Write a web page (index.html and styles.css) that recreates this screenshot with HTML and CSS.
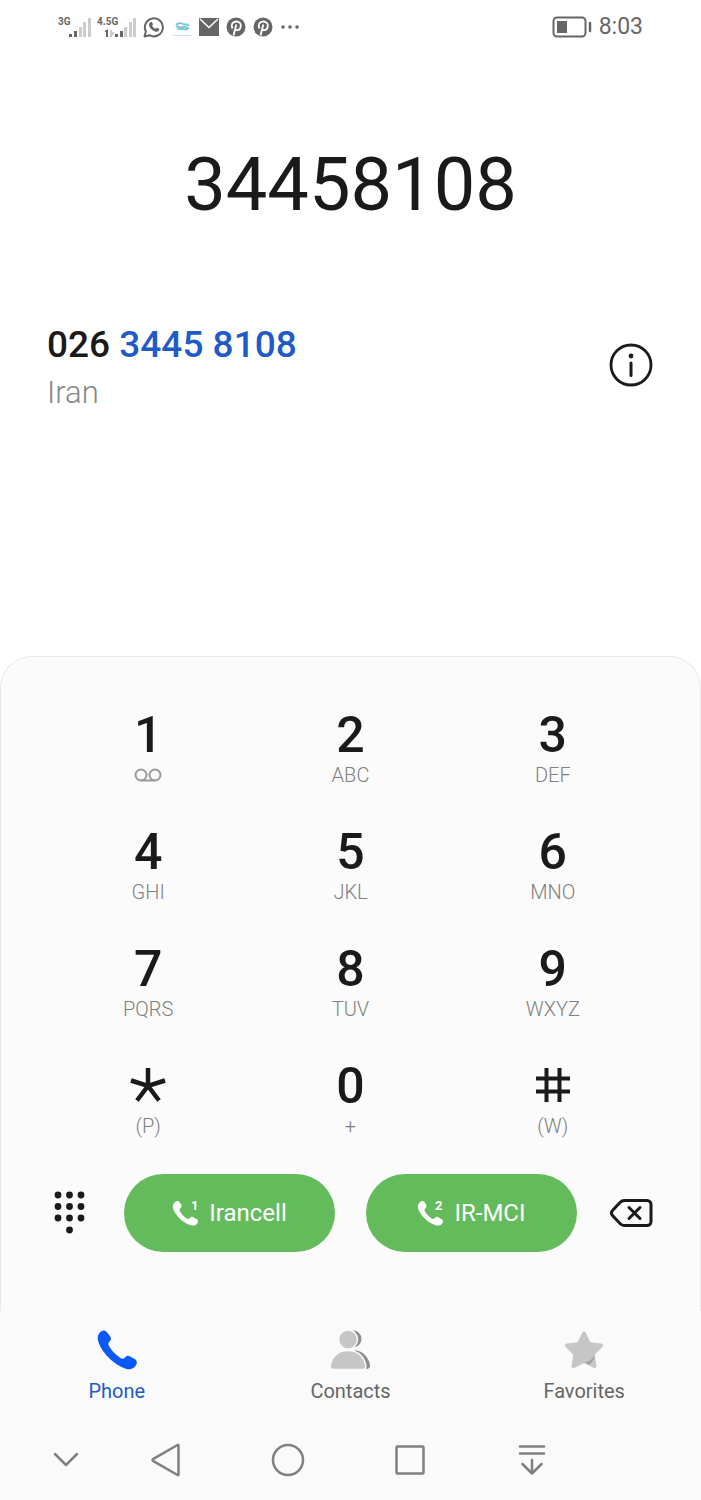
FILE: index.html
```html
<!DOCTYPE html>
<html lang="en">
<head>
  <meta charset="UTF-8">
  <meta name="viewport" content="width=device-width, initial-scale=1.0">
  <title>Phone</title>
  <link rel="stylesheet" href="styles.css">
</head>
<body>
  <header class="status">
    <div class="status-left">
      <svg class="signal" width="80" height="24" viewBox="0 0 80 24">
        <text x="0" y="10">3G</text>
        <text x="39" y="10">4.5G</text>
        <path class="on" d="M11 19h3v3h-3zM16 16h3v6h-3z"/>
        <path class="off" d="M21 12h3v10h-3zM25 7h3v15h-3zM30 3h3v19h-3z"/>
        <path class="on" d="M57 19h3v3h-3zM62 16h3v6h-3zM47 16l3-2v8h-2v-5h-1z"/>
        <path class="off" d="M52 15h2v2h2v3h-2v2h-2zM66 12h3v10h-3zM71 7h3v15h-3zM75 3h3v19h-3z"/>
      </svg>
      <svg width="22" height="22" viewBox="0 0 22 22">
        <path d="M1.500 20.500l1.400-5A9 9 0 1 1 6.500 19.200z" fill="none" stroke="#666" stroke-width="2" stroke-linejoin="round"/>
        <path d="M7.600 6c.6-.5 1.200-.3 1.500.3l.8 1.800c.2.6-.7 1.300-.7 1.700.6 1.400 1.800 2.500 3.200 3 .5 0 1.100-1.200 1.600-1l2 1c.6.4.1 1.800-.5 2.300-1 .8-2.300.9-4.100.1-2.500-1.100-4.300-3-5.100-5C5.700 8.500 6.300 6.900 7.600 6z" fill="#666"/>
      </svg>
      <svg width="20" height="20" viewBox="0 0 20 20">
        <path d="M1 1h18v18H1z" fill="#fdfefe"/>
        <path d="M1 18.500h18" stroke="#c5e8ec"/>
        <path d="M4 8c2-2 5-2 7-1s4-1 6 2M4 10c3-2 4 2 7 0s3 2 6 1M5 12c3-1 8 1 11 0" fill="none" stroke="#79c7d2" stroke-width="1.800"/>
      </svg>
      <svg width="20" height="18" viewBox="0 0 20 18">
        <path d="M0 0h20v18H0z" fill="#666"/>
        <path d="M1 1l9 8.500L19 1" fill="none" stroke="#fff" stroke-width="1.500"/>
      </svg>
      <svg width="20" height="20" viewBox="0 0 20 20">
        <circle cx="10" cy="10" r="9.500" fill="#666"/>
        <path d="M6.500 11.500C4.500 8 6.500 4.500 10.300 4.500c3 0 4.700 2 4.500 4.400-.2 2.500-1.700 4.300-3.500 4.300-1.100 0-1.700-.6-2-1.200M10.300 7.500L7.500 18.500" fill="none" stroke="#fff" stroke-width="1.800"/>
      </svg>
      <svg width="20" height="20" viewBox="0 0 20 20">
        <circle cx="10" cy="10" r="9.500" fill="#666"/>
        <path d="M6.500 11.500C4.500 8 6.500 4.500 10.300 4.500c3 0 4.700 2 4.500 4.400-.2 2.500-1.700 4.300-3.500 4.300-1.100 0-1.700-.6-2-1.200M10.300 7.500L7.500 18.500" fill="none" stroke="#fff" stroke-width="1.800"/>
      </svg>
      <svg width="20" height="20" viewBox="0 0 20 20" fill="#666">
        <circle cx="3" cy="10" r="1.800"/><circle cx="10" cy="10" r="1.800"/><circle cx="17" cy="10" r="1.800"/>
      </svg>
    </div>
    <div class="status-right">
      <svg width="40" height="22" viewBox="0 0 40 22">
        <rect x="1.500" y="1.500" width="32" height="19" rx="3.500" fill="none" stroke="#666" stroke-width="2"/>
        <path d="M5 5h10v12H5z" fill="#666"/>
        <path d="M38 7v8" stroke="#666" stroke-width="2.500" stroke-linecap="round"/>
      </svg>
      <span>8:03</span>
    </div>
  </header>

  <main class="dialer">
    <input class="number" type="tel" value="34458108" aria-label="Number">

    <section class="match">
      <div class="match-text">
        <p class="match-number">026 <span>3445 8108</span></p>
        <p class="match-place">Iran</p>
      </div>
      <button class="icon-btn" aria-label="Details">
        <svg width="44" height="44" viewBox="0 0 44 44">
          <circle cx="22" cy="22" r="20" fill="none" stroke="#1a1a1a" stroke-width="2.800"/>
          <circle cx="22" cy="13" r="2.400" fill="#1a1a1a"/>
          <path d="M22 20v12.500" stroke="#1a1a1a" stroke-width="3" stroke-linecap="round"/>
        </svg>
      </button>
    </section>

    <section class="panel">
      <div class="keys">
        <button class="key"><b>1</b>
          <small><svg width="28" height="14" viewBox="0 0 28 14" fill="none" stroke="#999" stroke-width="2"><circle cx="7" cy="7" r="5.500"/><circle cx="21" cy="7" r="5.500"/><path d="M7 12.500h14"/></svg></small>
        </button>
        <button class="key"><b>2</b><small>ABC</small></button>
        <button class="key"><b>3</b><small>DEF</small></button>
        <button class="key"><b>4</b><small>GHI</small></button>
        <button class="key"><b>5</b><small>JKL</small></button>
        <button class="key"><b>6</b><small>MNO</small></button>
        <button class="key"><b>7</b><small>PQRS</small></button>
        <button class="key"><b>8</b><small>TUV</small></button>
        <button class="key"><b>9</b><small>WXYZ</small></button>
        <button class="key" aria-label="Star">
          <svg width="36" height="56" viewBox="0 0 36 56" fill="none" stroke="#1a1a1a" stroke-width="4.500">
            <path d="M18 10v18M1 22.500L18 28l17-5.500M7 42.500L18 28l11 14.500"/>
          </svg>
          <small>(P)</small>
        </button>
        <button class="key"><b>0</b><small>+</small></button>
        <button class="key" aria-label="Hash">
          <svg width="36" height="56" viewBox="0 0 36 56" fill="none" stroke="#1a1a1a" stroke-width="4">
            <path d="M11.500 10v34M24.500 10v34M1 20.500h34M1 33.500h34"/>
          </svg>
          <small>(W)</small>
        </button>
      </div>

      <div class="actions">
        <button class="icon-btn" aria-label="Hide keypad">
          <svg width="32" height="46" viewBox="0 0 32 46" fill="#1a1a1a">
            <circle cx="4" cy="5" r="3.400"/><circle cx="15.500" cy="5" r="3.400"/><circle cx="27" cy="5" r="3.400"/>
            <circle cx="4" cy="16.500" r="3.400"/><circle cx="15.500" cy="16.500" r="3.400"/><circle cx="27" cy="16.500" r="3.400"/>
            <circle cx="4" cy="28" r="3.400"/><circle cx="15.500" cy="28" r="3.400"/><circle cx="27" cy="28" r="3.400"/>
            <circle cx="15.500" cy="40" r="3.400"/>
          </svg>
        </button>
        <button class="call">
          <svg width="28" height="30" viewBox="0 0 28 30">
            <path d="M4 3.500c1.500-1 3-.4 4 1.200l1.200 2c.8 1.500.3 2.500-1 3.700-1 1-.8 2 .2 3.600 1.400 2.300 3.400 4.500 5.800 6.200 1.500 1 2.600 1 3.600-.1 1-1.200 2-1.700 3.500-.9l3 1.800c1.700 1.100 2.300 2.400 1.300 4-1.500 2.500-4.200 3.200-7.700 1.900C10 24 3 17 1 10.200.2 7.200 1.500 5 4 3.500z" fill="#fff"/>
            <text x="19" y="12">1</text>
          </svg>
          Irancell
        </button>
        <button class="call">
          <svg width="28" height="30" viewBox="0 0 28 30">
            <path d="M4 3.500c1.500-1 3-.4 4 1.200l1.200 2c.8 1.500.3 2.500-1 3.700-1 1-.8 2 .2 3.600 1.400 2.300 3.400 4.500 5.800 6.200 1.500 1 2.600 1 3.600-.1 1-1.200 2-1.700 3.500-.9l3 1.800c1.700 1.100 2.300 2.400 1.300 4-1.500 2.500-4.200 3.200-7.700 1.900C10 24 3 17 1 10.200.2 7.200 1.500 5 4 3.500z" fill="#fff"/>
            <text x="18" y="12">2</text>
          </svg>
          IR-MCI
        </button>
        <button class="icon-btn" aria-label="Delete">
          <svg width="44" height="30" viewBox="0 0 44 30" fill="none" stroke="#1a1a1a" stroke-width="3" stroke-linecap="round" stroke-linejoin="round">
            <path d="M15 2.500h23a4 4 0 0 1 4 4v17a4 4 0 0 1-4 4H15c-2 0-3-1-4-2L3.500 17.500c-1.500-1.500-1.500-3.500 0-5L11 4.500c1-1 2-2 4-2z"/>
            <path d="M20 9.500l11 11M31 9.500l-11 11"/>
          </svg>
        </button>
      </div>
    </section>
  </main>

  <nav class="tabs">
    <a href="#phone" class="active">
      <svg width="40" height="40" viewBox="0 0 40 40">
        <path d="M4.500 1.200c2-1.300 4.300-.8 5.700 1.300l3 4c1.300 2 .9 3.300-.7 5-1.300 1.300-1.600 2.500-.6 4.300 2.500 4.700 6.700 9 11.500 12.200 1.800 1.100 3.200 1 4.600-.6 1.600-1.900 3.200-2.100 5.100-1l4.600 2.700c2.200 1.400 2.700 3.500 1.500 5.600-2 3.800-6 5.400-10.500 4C16.500 34.500 4 22 1 10.500 0 6.700 1.300 3.300 4.500 1.200z" fill="#0a59f7"/>
      </svg>
      Phone
    </a>
    <a href="#contacts">
      <svg width="40" height="40" viewBox="0 0 40 40">
        <circle cx="23" cy="9" r="8.500" fill="#8e8e8e"/>
        <path d="M25 20c8 1 14 8 15 15 .3 3-.8 4-4 4z" fill="#8e8e8e"/>
        <circle cx="18" cy="9.500" r="9.500" fill="#c6c6c6" stroke="#fafafa" stroke-width="1.500"/>
        <path d="M4 39.500c-3.500 0-4.500-2-3.500-5.500C3 25.500 9 20.500 18 20.500S33 25.500 35.500 34c1 3.500 0 5.500-3.500 5.500z" fill="#c6c6c6" stroke="#fafafa" stroke-width="1.500"/>
      </svg>
      Contacts
    </a>
    <a href="#favorites">
      <svg width="40" height="40" viewBox="0 0 40 40">
        <path d="M20 3.500l5 10.500 12 1.500-8.500 8.500L30.500 36 20 31 9.500 36l2-12L3 15.500 15 14z" fill="#c6c6c6" stroke="#c6c6c6" stroke-width="4" stroke-linejoin="round"/>
        <path d="M31 25c-2 3.500-5.500 6.500-10 7.500l4.500 2c3-2.500 5-5.500 5.500-9.500z" fill="#a0a0a0"/>
      </svg>
      Favorites
    </a>
  </nav>

  <footer class="system">
    <button class="hide-bar" aria-label="Hide bar">
      <svg width="26" height="32" viewBox="0 0 26 32"><path d="M2 10l11 11 11-11"/></svg>
    </button>
    <button aria-label="Back">
      <svg width="32" height="34" viewBox="0 0 32 34"><path d="M28.500 2.500v29q0 1-1 .5L3 17.800q-1-.8 0-1.600L27.500 2q1-.5 1 .5z"/></svg>
    </button>
    <button aria-label="Home">
      <svg width="34" height="34" viewBox="0 0 34 34"><circle cx="17" cy="17" r="15"/></svg>
    </button>
    <button aria-label="Recent apps">
      <svg width="32" height="32" viewBox="0 0 32 32"><rect x="2.500" y="2.500" width="27" height="27" rx="1"/></svg>
    </button>
    <button aria-label="Notifications">
      <svg width="28" height="32" viewBox="0 0 28 32"><path d="M2 2.500h24M2 9.500h24M14 16v13.500M4.500 20l9.500 9.500L23.500 20"/></svg>
    </button>
  </footer>
</body>
</html>
```

FILE: styles.css
```css
* {
  box-sizing: border-box;
}
body {
  margin: 0;
  min-height: 100vh;
  display: flex;
  flex-direction: column;
  background-color: #fff;
  color: #1a1a1a;
  font-family: Roboto, "Open Sans", sans-serif;
}
svg {
  display: block;
  flex: none;
}
p {
  margin: 0;
}
button {
  padding: 0;
  border: none;
  background: none;
  color: inherit;
  font-family: inherit;
  cursor: pointer;
}

/* status bar */
.status {
  display: flex;
  justify-content: space-between;
  align-items: center;
  height: 54px;
  padding: 0 58px;
  color: #666;
}
.status-left {
  display: flex;
  align-items: center;
  gap: 7px;
}
.status-left .signal {
  margin-right: -2px;
}
.status-right {
  display: flex;
  align-items: center;
  gap: 7px;
  font-size: 23px;
  line-height: 28px;
}
.signal text {
  font-size: 10px;
  font-weight: 700;
  fill: #666;
}
.signal .on {
  fill: #666;
}
.signal .off {
  fill: #ccc;
}

/* number and match */
.dialer {
  flex: 1;
  display: flex;
  flex-direction: column;
}
.number {
  width: 100%;
  margin-top: 83px;
  padding: 0;
  border: none;
  background: none;
  color: inherit;
  font-family: inherit;
  font-size: 74px;
  line-height: 96px;
  height: 96px;
  text-align: center;
}
.match {
  display: flex;
  justify-content: space-between;
  align-items: flex-start;
  margin-top: 88px;
  padding: 0 48px 0 47px;
}
.match .icon-btn {
  padding-top: 22px;
}
.match-number {
  font-size: 37px;
  line-height: 48px;
  font-weight: 500;
}
.match-number span {
  color: #1f5bc8;
}
.match-place {
  font-size: 31px;
  line-height: 48px;
  font-weight: 300;
  color: #888;
}

/* keypad */
.panel {
  margin-top: auto;
  padding: 50px 46px 59px;
  border: 1px solid #e8e8e8;
  border-bottom: none;
  border-radius: 32px 32px 0 0;
  background-color: #fbfbfb;
}
.keys {
  display: grid;
  grid-template-columns: repeat(3, 1fr);
  row-gap: 37px;
}
.key {
  display: flex;
  flex-direction: column;
  align-items: center;
}
.key b {
  font-size: 50px;
  line-height: 56px;
  font-weight: 500;
}
.key small {
  display: flex;
  align-items: center;
  height: 24px;
  font-size: 20px;
  line-height: 24px;
  font-weight: 300;
  color: #808080;
}
.actions {
  display: flex;
  align-items: center;
  gap: 31px;
  margin-top: 36px;
}
.actions .icon-btn {
  display: flex;
  justify-content: center;
  width: 46px;
}
.call {
  flex: 1;
  display: flex;
  justify-content: center;
  align-items: center;
  gap: 9px;
  height: 78px;
  border-radius: 39px;
  background-color: #64bb5c;
  color: #fff;
  font-size: 24px;
  line-height: 32px;
}
.call text {
  font-size: 13px;
  font-weight: 700;
  fill: #fff;
}

/* bottom tabs */
.tabs {
  display: grid;
  grid-template-columns: repeat(3, 1fr);
  padding: 19px 0 17px;
  background-color: #fafafa;
}
.tabs a {
  display: flex;
  flex-direction: column;
  align-items: center;
  gap: 9px;
  color: #666;
  font-size: 20px;
  line-height: 24px;
  text-decoration: none;
}
.tabs .active {
  color: #1f5bc8;
}

/* system bar */
.system {
  display: grid;
  grid-template-columns: 105fr 122fr 122fr 122fr 122fr 108fr;
  height: 80px;
  background-color: #fafafa;
}
.system button {
  display: flex;
  justify-content: center;
  align-items: center;
}
.system .hide-bar {
  padding-left: 27px;
}
.system svg {
  fill: none;
  stroke: #808080;
  stroke-width: 2.5;
  stroke-linecap: round;
  stroke-linejoin: round;
}
```
